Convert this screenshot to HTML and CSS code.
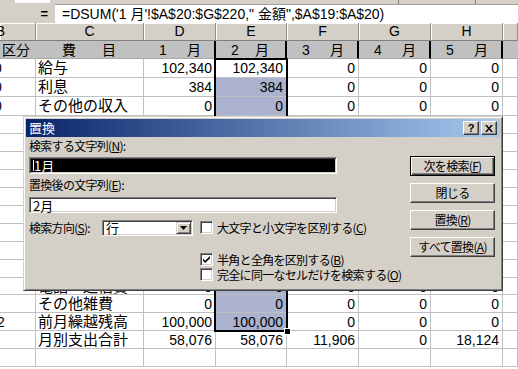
FILE: index.html
```html
<!DOCTYPE html>
<html lang="ja">
<head>
<meta charset="utf-8">
<title>置換</title>
<link rel="stylesheet" href="styles.css">
</head>
<body>
<div class="toolbar"><span class="tb-box"></span><span class="tb-sep s1"></span><span class="tb-sep s2"></span></div>
<div class="fbar">
  <div class="fb-left"><span class="eq">=</span></div>
  <div class="fb-text">=DSUM('1 月'!$A$20:$G$220,"&nbsp;金額",$A$19:$A$20)</div>
</div>
<div class="sheet">
  <div class="c hd hb">B</div><div class="c hd">C</div><div class="c hd">D</div><div class="c hd">E</div><div class="c hd">F</div><div class="c hd">G</div><div class="c hd">H</div><div class="c hd"></div>

  <div class="c t tb"><span>区</span><span>分</span></div><div class="c t tc"><span>費</span><span>目</span></div><div class="c t tk"><span>1</span><span>月</span></div><div class="c t tk te"><span>2</span><span>月</span></div><div class="c t tk"><span>3</span><span>月</span></div><div class="c t tk"><span>4</span><span>月</span></div><div class="c t tk"><span>5</span><span>月</span></div><div class="c t"></div>

  <div class="c b">0</div><div class="c j">給与</div><div class="c n">102,340</div><div class="c n">102,340</div><div class="c n">0</div><div class="c n">0</div><div class="c n">0</div><div class="c"></div>
  <div class="c b">0</div><div class="c j">利息</div><div class="c n">384</div><div class="c n s">384</div><div class="c n">0</div><div class="c n">0</div><div class="c n">0</div><div class="c"></div>
  <div class="c b">0</div><div class="c j">その他の収入</div><div class="c n">0</div><div class="c n s">0</div><div class="c n">0</div><div class="c n">0</div><div class="c n">0</div><div class="c"></div>

  <div class="c b"></div><div class="c j">食費</div><div class="c n">20,450</div><div class="c n s">20,450</div><div class="c n">0</div><div class="c n">0</div><div class="c n">0</div><div class="c"></div>
  <div class="c b"></div><div class="c j">住居費</div><div class="c n">0</div><div class="c n s">0</div><div class="c n">0</div><div class="c n">0</div><div class="c n">0</div><div class="c"></div>
  <div class="c b"></div><div class="c j">水道光熱費</div><div class="c n">8,230</div><div class="c n s">8,230</div><div class="c n">0</div><div class="c n">0</div><div class="c n">0</div><div class="c"></div>
  <div class="c b"></div><div class="c j">被服費</div><div class="c n">5,800</div><div class="c n s">5,800</div><div class="c n">0</div><div class="c n">0</div><div class="c n">0</div><div class="c"></div>
  <div class="c b"></div><div class="c j">医療費</div><div class="c n">0</div><div class="c n s">0</div><div class="c n">0</div><div class="c n">0</div><div class="c n">0</div><div class="c"></div>
  <div class="c b"></div><div class="c j">教育費</div><div class="c n">0</div><div class="c n s">0</div><div class="c n">0</div><div class="c n">0</div><div class="c n">0</div><div class="c"></div>
  <div class="c b"></div><div class="c j">交際費</div><div class="c n">12,000</div><div class="c n s">12,000</div><div class="c n">0</div><div class="c n">0</div><div class="c n">0</div><div class="c"></div>
  <div class="c b"></div><div class="c j">娯楽費</div><div class="c n">3,596</div><div class="c n s">3,596</div><div class="c n">0</div><div class="c n">0</div><div class="c n">0</div><div class="c"></div>
  <div class="c b"></div><div class="c j">交通費</div><div class="c n">8,000</div><div class="c n s">8,000</div><div class="c n">0</div><div class="c n">0</div><div class="c n">0</div><div class="c"></div>
  <div class="c b"></div><div class="c j">電話・通信費</div><div class="c n">0</div><div class="c n s">0</div><div class="c n">0</div><div class="c n">0</div><div class="c n">0</div><div class="c"></div>

  <div class="c b"></div><div class="c j">その他雑費</div><div class="c n">0</div><div class="c n s">0</div><div class="c n">0</div><div class="c n">0</div><div class="c n">0</div><div class="c"></div>
  <div class="c b b2">2</div><div class="c j">前月繰越残高</div><div class="c n">100,000</div><div class="c n s">100,000</div><div class="c n">0</div><div class="c n">0</div><div class="c n">0</div><div class="c"></div>
  <div class="c b"></div><div class="c j">月別支出合計</div><div class="c n">58,076</div><div class="c n">58,076</div><div class="c n">11,906</div><div class="c n">0</div><div class="c n">18,124</div><div class="c"></div>
  <div class="c b"></div><div class="c"></div><div class="c"></div><div class="c"></div><div class="c"></div><div class="c"></div><div class="c"></div><div class="c"></div>

  <div class="selbox"></div>
  <div class="handle"></div>
</div>

<div class="dlg">
  <div class="dlg-title">
    <span class="dt-text">置換</span>
    <span class="tbtn q">?</span>
    <span class="tbtn x"><svg width="8" height="7" viewBox="0 0 8 7"><path d="M0 0h2l2 2.5L6 0h2L5 3.5 8 7H6L4 4.5 2 7H0l3-3.5z" fill="#000"/></svg></span>
  </div>
  <div class="dlg-body">
    <div class="dlg-left">
      <div class="lbl l1">検索する文字列(<u>N</u>):</div>
      <div class="inp inp-sel"><span class="caret"></span>1月</div>
      <div class="lbl l2">置換後の文字列(<u>E</u>):</div>
      <div class="inp inp2">2月</div>
      <div class="row3">
        <div class="dir">
          <span class="lbl">検索方向(<u>S</u>):</span>
          <div class="combo"><span class="combo-val">行</span><span class="dd"><svg width="7" height="4" viewBox="0 0 7 4"><path d="M0 0h7L3.5 4z" fill="#000"/></svg></span></div>
        </div>
        <div class="opts">
          <div class="opt"><span class="cb"></span>大文字と小文字を区別する(<u>C</u>)</div>
          <div class="opt o2"><span class="cb"><svg width="9" height="9" viewBox="0 0 9 9"><path d="M1 3.5l2.2 2.2L8 1v2.2L3.2 8 1 5.8z" fill="#000"/></svg></span>半角と全角を区別する(<u>B</u>)</div>
          <div class="opt"><span class="cb"></span>完全に同一なセルだけを検索する(<u>O</u>)</div>
        </div>
      </div>
    </div>
    <div class="dlg-right">
      <div class="btn def"><span class="btn-in">次を検索(<u>F</u>)</span></div>
      <div class="btn"><span class="btn-in">閉じる</span></div>
      <div class="btn"><span class="btn-in">置換(<u>R</u>)</span></div>
      <div class="btn"><span class="btn-in">すべて置換(<u>A</u>)</span></div>
    </div>
  </div>
</div>
</body>
</html>
```

FILE: styles.css
```css
html, body {
  margin: 0;
  padding: 0;
}
body {
  width: 518px;
  height: 369px;
  overflow: hidden;
  background: #fff;
  position: relative;
  font-family: "Liberation Sans", "Noto Sans CJK JP", sans-serif;
  color: #000;
}

/* toolbar remnant */
.toolbar {
  height: 4px;
  background: #d4d0c8;
  display: flex;
}
.tb-box {
  margin-left: 15px;
  width: 35px;
  height: 3px;
  background: #fff;
}
.tb-sep {
  width: 1px;
  height: 4px;
  background: #808080;
}
.s1 { margin-left: 348px; }
.s2 { margin-left: 76px; }

/* formula bar */
.fbar {
  display: flex;
  height: 19px;
  background: #d4d0c8;
}
.fb-left {
  width: 55px;
  display: flex;
  justify-content: flex-end;
  align-items: center;
  padding-right: 7px;
  box-sizing: border-box;
}
.eq {
  font-weight: bold;
  font-size: 13px;
}
.fb-text {
  flex: 1;
  background: #fff;
  border-top: 1px solid #a0a0a0;
  padding-left: 7px;
  font-size: 14px;
  line-height: 18px;
  white-space: nowrap;
  overflow: hidden;
}

/* sheet */
.sheet {
  position: relative;
  display: grid;
  grid-template-columns: 36px 108px 72px 71px 72px 72px 72px 15px;
  grid-template-rows: 18px 18px 19px 19px 19px repeat(9, 18px) 17px 18px 18px 18px 18px 18px;
}
.c {
  box-sizing: border-box;
  border-right: 1px solid #c0c0c0;
  border-bottom: 1px solid #c0c0c0;
  font-size: 14px;
  line-height: 18px;
  white-space: nowrap;
  overflow: hidden;
  padding: 0 2px;
}
.n {
  text-align: right;
  padding-right: 3px;
}
.j {
  font-size: 15px;
}
.b {
  text-indent: -6px;
  padding: 0;
}
.b2 { text-indent: -3px; }
.s { background: #aab2cf; }

.hd {
  background: #d4d0c8;
  border-right-color: #909090;
  border-bottom-color: #808080;
  box-shadow: inset 1px 1px #fff;
  text-align: center;
  font-size: 14px;
  line-height: 17px;
}
.hb { text-indent: -34px; }

.t {
  background: #c0c0c0;
  border-right-color: #c0c0c0;
  border-bottom-color: #a8a8a8;
  display: flex;
  justify-content: space-between;
  font-size: 14px;
  line-height: 18px;
}
.tb { padding: 0 5px 0 2px; }
.tc { padding: 0 27px 0 26px; }
.tk {
  padding: 0 13px 0 15px;
  border-right: 2px solid #000;
}
.te { padding-right: 16px; }

.selbox {
  position: absolute;
  left: 214px;
  top: 35px;
  width: 74px;
  height: 274px;
  box-sizing: border-box;
  border: 2px solid #000;
  pointer-events: none;
}
.handle {
  position: absolute;
  left: 284px;
  top: 305px;
  width: 5px;
  height: 5px;
  background: #000;
  border: 1px solid #fff;
}

/* dialog */
.dlg {
  position: absolute;
  left: 23px;
  top: 116px;
  width: 480px;
  height: 175px;
  box-sizing: border-box;
  background: #d4d0c8;
  border: 1px solid;
  border-color: #d4d0c8 #404040 #404040 #d4d0c8;
  box-shadow: inset 1px 1px #fff, inset -1px -1px #808080;
  padding: 2px;
  font-family: "Noto Sans CJK JP", "Liberation Sans", sans-serif;
  font-size: 12px;
  letter-spacing: -0.7px;
}
.dlg-title {
  height: 18px;
  background: linear-gradient(to right, #0a246a, #a6caf0);
  display: flex;
  align-items: center;
  padding: 0 3px 0 3px;
}
.dt-text {
  color: #fff;
  font-size: 13px;
  line-height: 18px;
  letter-spacing: 0;
  flex: 1;
}
.tbtn {
  width: 16px;
  height: 14px;
  box-sizing: border-box;
  background: #d4d0c8;
  border: 1px solid;
  border-color: #fff #404040 #404040 #fff;
  box-shadow: inset -1px -1px #808080;
  display: flex;
  align-items: center;
  justify-content: center;
  letter-spacing: 0;
}
.q {
  font-family: "Liberation Sans", sans-serif;
  font-weight: bold;
  font-size: 11px;
  line-height: 12px;
  margin-right: 2px;
}

.dlg-body {
  display: flex;
  padding: 0 5px 0 3px;
}
.dlg-left {
  width: 308px;
  display: flex;
  flex-direction: column;
}
.lbl {
  line-height: 18px;
  height: 18px;
  white-space: nowrap;
}
.l1 { margin-top: 0; }
.l2 { margin-top: 2px; }
.inp {
  box-sizing: border-box;
  height: 17px;
  margin-top: 2px;
  border: 1px solid;
  border-color: #808080 #fff #fff #808080;
  box-shadow: inset 1px 1px #404040, inset -1px -1px #d4d0c8;
  background: #fff;
  padding-left: 3px;
  line-height: 15px;
  font-size: 13px;
  letter-spacing: 0;
}
.inp-sel {
  background: #000;
  color: #fff;
  display: flex;
  align-items: center;
}
.caret {
  width: 1px;
  height: 11px;
  background: #fff;
}
.inp2 {
  margin-top: 3px;
  height: 16px;
}
.row3 {
  display: flex;
  margin-top: 7px;
}
.dir {
  display: flex;
  align-items: flex-start;
}
.dir .lbl {
  width: 73px;
  line-height: 16px;
  height: 16px;
}
.combo {
  width: 91px;
  height: 16px;
  box-sizing: border-box;
  border: 1px solid;
  border-color: #808080 #fff #fff #808080;
  box-shadow: inset 1px 1px #404040, inset -1px -1px #d4d0c8;
  background: #fff;
  display: flex;
  align-items: center;
  padding: 1px 1px 1px 3px;
}
.combo-val {
  flex: 1;
  font-size: 13px;
  line-height: 14px;
}
.dd {
  width: 15px;
  height: 12px;
  box-sizing: border-box;
  background: #d4d0c8;
  border: 1px solid;
  border-color: #d4d0c8 #404040 #404040 #d4d0c8;
  box-shadow: inset 1px 1px #fff, inset -1px -1px #808080;
  display: flex;
  align-items: center;
  justify-content: center;
}
.opts {
  margin-left: 7px;
  display: flex;
  flex-direction: column;
}
.opt {
  display: flex;
  align-items: center;
  height: 15px;
  white-space: nowrap;
  line-height: 15px;
}
.o2 { margin-top: 17px; }
.cb {
  width: 13px;
  height: 13px;
  flex: none;
  box-sizing: border-box;
  border: 1px solid;
  border-color: #808080 #fff #fff #808080;
  box-shadow: inset 1px 1px #404040, inset -1px -1px #d4d0c8;
  background: #fff;
  margin-right: 4px;
  display: flex;
  align-items: center;
  justify-content: center;
}

.dlg-right {
  margin-left: auto;
  width: 85px;
  display: flex;
  flex-direction: column;
  gap: 7px;
  padding-top: 19px;
}
.btn {
  height: 20px;
  box-sizing: border-box;
  background: #d4d0c8;
  border: 1px solid;
  border-color: #fff #404040 #404040 #fff;
  box-shadow: inset -1px -1px #808080;
  display: flex;
  align-items: center;
  justify-content: center;
  white-space: nowrap;
}
.btn.def {
  border: 1px solid #000;
  box-shadow: inset 1px 1px #fff, inset -1px -1px #404040, inset -2px -2px #808080;
}
.btn-in {
  line-height: 16px;
}
```
